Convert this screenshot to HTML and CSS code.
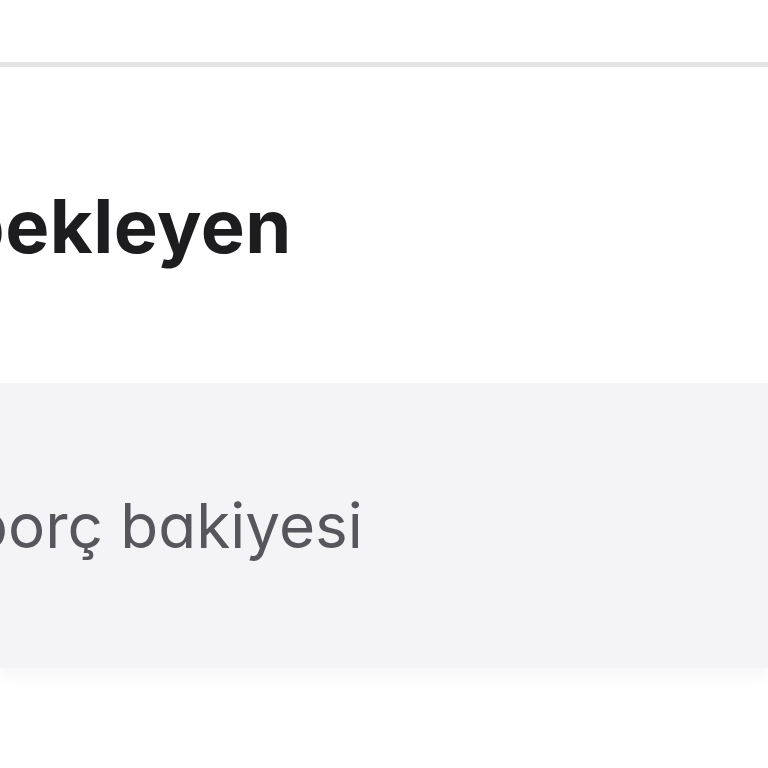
FILE: index.html
```html
<!DOCTYPE html>
<html lang="tr">
<head>
<meta charset="utf-8">
<link rel="stylesheet" href="styles.css">
</head>
<body>
  <header class="topbar"></header>
  <section class="title-block">
    <h1 class="title">bekleyen</h1>
  </section>
  <section class="panel">
    <p class="panel-text">borç bakiyesi</p>
  </section>
</body>
</html>
```

FILE: styles.css
```css
html, body {
  margin: 0;
  padding: 0;
  background: #ffffff;
  overflow: hidden;
  height: 768px;
}

body {
  font-family: "Inter", "Noto Sans", sans-serif;
  font-feature-settings: "cv11" 1;
}

.topbar {
  height: 62px;
  border-bottom: 5px solid #e4e4e4;
  background: #ffffff;
}

.title-block {
  height: 316px;
  display: flex;
  align-items: center;
}

.title {
  margin: 0 0 0 -42px;
  font-size: 74px;
  font-weight: 700;
  color: #1d1d1f;
  letter-spacing: 0.5px;
  line-height: 1;
  padding-top: 2px;
}

.panel {
  height: 285px;
  background: #f4f4f6;
  display: flex;
  align-items: center;
  box-shadow: 0 10px 14px rgba(0, 0, 0, 0.035);
}

.panel-text {
  margin: 0 0 0 -30px;
  font-size: 62px;
  font-weight: 400;
  color: #57565d;
  letter-spacing: 0;
  line-height: 1;
}
```
